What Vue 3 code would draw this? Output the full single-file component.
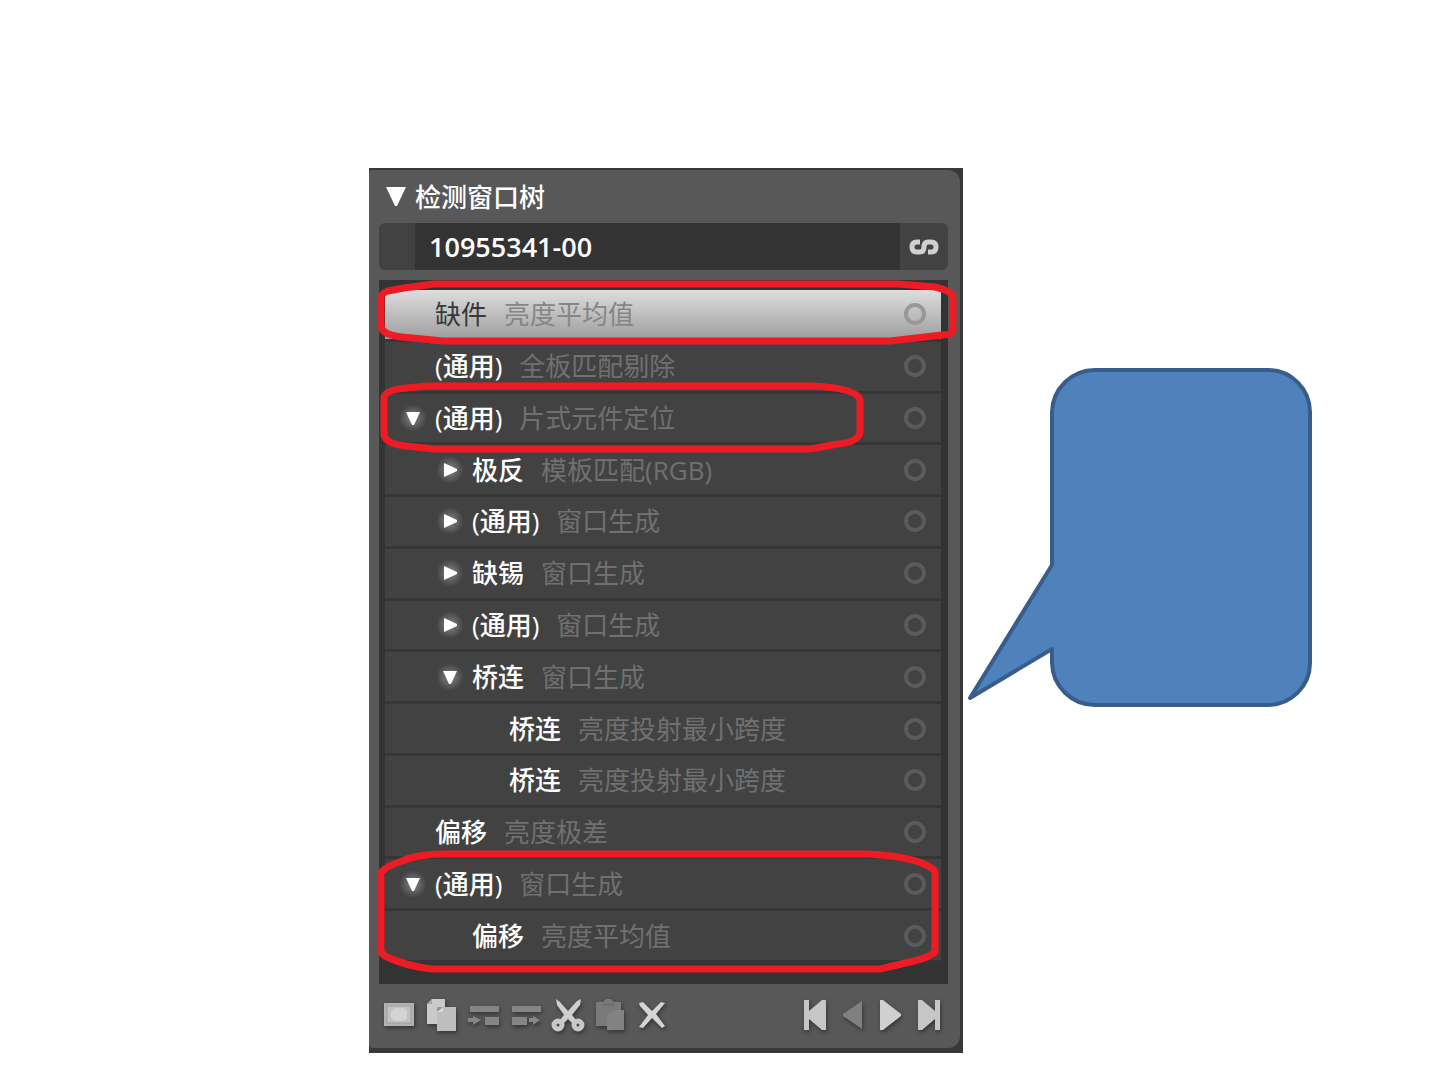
<script setup>
import { ref } from 'vue'

const board = ref('10955341-00')

const rows = [
  { name: '缺件', method: '亮度平均值', level: 0, selected: true },
  { name: '(通用)', method: '全板匹配剔除', level: 0 },
  { name: '(通用)', method: '片式元件定位', level: 0, toggle: 'open' },
  { name: '极反', method: '模板匹配(RGB)', level: 1, toggle: 'closed' },
  { name: '(通用)', method: '窗口生成', level: 1, toggle: 'closed' },
  { name: '缺锡', method: '窗口生成', level: 1, toggle: 'closed' },
  { name: '(通用)', method: '窗口生成', level: 1, toggle: 'closed' },
  { name: '桥连', method: '窗口生成', level: 1, toggle: 'open' },
  { name: '桥连', method: '亮度投射最小跨度', level: 2 },
  { name: '桥连', method: '亮度投射最小跨度', level: 2 },
  { name: '偏移', method: '亮度极差', level: 0 },
  { name: '(通用)', method: '窗口生成', level: 0, toggle: 'open' },
  { name: '偏移', method: '亮度平均值', level: 1 },
]
</script>

<template>
  <main class="slide">
    <section class="panel">
      <div class="frame">
        <header class="head">
          <button class="fold" aria-label="折叠">
            <svg width="20" height="20" viewBox="0 0 20 20"><path d="M0 0H20L11 19H9Z" fill="#fff" /></svg>
          </button>
          <h1>检测窗口树</h1>
        </header>

        <div class="board">
          <input v-model="board" type="text" aria-label="料号" />
          <button class="link" aria-label="链接">
            <svg width="30" height="18" viewBox="0 0 30 18">
              <path d="M11 4H8Q3 4 3 9Q3 14 8 14H11Q15 14 15 9Q15 4 19 4H22Q27 4 27 9Q27 14 22 14H19" fill="none" stroke="#d0d0d0" stroke-width="5" />
            </svg>
          </button>
        </div>

        <div class="tree-box">
          <ul class="tree">
            <li v-for="(row, i) in rows" :key="i" class="row" :class="['level-' + row.level, { selected: row.selected }]">
              <button v-if="row.toggle" class="toggle" :aria-label="row.toggle === 'open' ? '收起' : '展开'">
                <svg width="14" height="14" viewBox="0 0 14 14">
                  <path v-if="row.toggle === 'open'" d="M0 1H14L8 14H6Z" fill="#fff" />
                  <path v-else d="M1 0L14 6V8L1 14Z" fill="#fff" />
                </svg>
              </button>
              <span v-else class="toggle-space"></span>
              <span class="name">{{ row.name }}</span>
              <span class="method">{{ row.method }}</span>
              <span class="ring"></span>
            </li>
          </ul>
        </div>

        <footer class="tools">
          <div class="group edit">
            <button aria-label="新建窗口">
              <svg width="34" height="34" viewBox="0 0 34 34">
                <rect x="1" y="5" width="30" height="23" fill="#b2b2b2" />
                <rect x="4" y="8" width="24" height="17" fill="#c2c2c2" stroke="#a0a0a0" />
                <rect x="8" y="10" width="16" height="13" rx="5" fill="#d4d4d4" />
              </svg>
            </button>
            <button aria-label="复制">
              <svg width="34" height="34" viewBox="0 0 34 34">
                <path d="M7 1H20V9H13V26H2V6Z" fill="#cacaca" />
                <path d="M7 1V6H2Z" fill="#a6a6a6" />
                <path d="M18 9H31V33H12V14Z" fill="#bebebe" />
                <path d="M13 9H18L12 14V10Z" fill="#929292" />
                <path d="M18 9V14H12Z" fill="#dadada" />
              </svg>
            </button>
            <button aria-label="插入到左侧">
              <svg width="34" height="34" viewBox="0 0 34 34">
                <path d="M3 8H32V14H3ZM18 19H32V27H18ZM1 20H6V18L14 22L6 27V24H1Z" fill="#858585" />
              </svg>
            </button>
            <button aria-label="插入到右侧">
              <svg width="34" height="34" viewBox="0 0 34 34">
                <path d="M3 8H32V14H3ZM3 19H18V27H3ZM20 20H24V18L31 22L24 27V24H20Z" fill="#858585" />
              </svg>
            </button>
            <button aria-label="剪切">
              <svg width="34" height="34" viewBox="0 0 34 34">
                <path d="M5 1L9 4L17 13L26 3L30 1L29 7L21 17L26 23L22 26L17 21L12 26L8 23L13 17L6 7Z" fill="#cfcfcf" />
                <circle cx="7" cy="27" r="4" fill="#4c4c4c" stroke="#c8c8c8" stroke-width="5" />
                <circle cx="27" cy="27" r="4" fill="#4c4c4c" stroke="#c8c8c8" stroke-width="5" />
              </svg>
            </button>
            <button aria-label="粘贴" disabled>
              <svg width="34" height="34" viewBox="0 0 34 34">
                <path d="M3 4H10L13 1H18L21 4H28V28H3Z" fill="#7a7a7a" />
                <path d="M20 12H31V32H14V18Z" fill="#828282" />
                <path d="M10 5H21V8H10Z" fill="#707070" />
              </svg>
            </button>
            <button aria-label="删除">
              <svg width="34" height="34" viewBox="0 0 34 34">
                <path d="M4 5L8 4L17 13L26 4L30 5L21 16L30 28L27 30L17 20L8 30L4 29L13 17L5 8Z" fill="#d4d4d4" />
              </svg>
            </button>
          </div>
          <div class="group play">
            <button aria-label="第一个">
              <svg width="30" height="34" viewBox="0 0 30 34"><path d="M4 2H9V13L22 2H26V32H22L9 21V32H4Z" fill="#c6c6c6" /></svg>
            </button>
            <button aria-label="上一个" disabled>
              <svg width="30" height="34" viewBox="0 0 30 34"><path d="M24 3V31L5 18V16Z" fill="#808080" /></svg>
            </button>
            <button aria-label="下一个">
              <svg width="30" height="34" viewBox="0 0 30 34"><path d="M4 2H7L25 16V18L7 32H4Z" fill="#d0d0d0" /></svg>
            </button>
            <button aria-label="最后一个">
              <svg width="30" height="34" viewBox="0 0 30 34"><path d="M4 2H8L21 13V2H26V32H21V21L8 32H4Z" fill="#c6c6c6" /></svg>
            </button>
          </div>
        </footer>
      </div>

      <svg class="marks" viewBox="369 168 594 885" preserveAspectRatio="none" aria-hidden="true">
        <path d="M381 299Q381 293 388 291L404 288L434 284H898L935 287Q952 291 953 297V330Q952 335 942 335L890 341H443L402 337Q382 335 381 326Z" />
        <path d="M384 397Q386 390 406 388L428 386H812Q857 388 860 400V432Q859 442 838 444L810 449H435L406 446Q386 444 384 435Z" />
        <path d="M381 873Q384 867 402 861Q418 854 443 854H868Q921 857 935 871V952Q930 957 914 961L880 969H432Q405 966 385 956Q381 954 381 949Z" />
      </svg>
    </section>

    <aside class="aside">
      <svg class="callout" viewBox="0 0 346 341" aria-hidden="true">
        <path d="M128 3H301A42 42 0 0 1 343 45V296A42 42 0 0 1 301 338H128A43 43 0 0 1 85 296V282L3 331L85 198V45A43 43 0 0 1 128 3Z" fill="#4f81bd" stroke="#385d8a" stroke-width="4" stroke-linejoin="round" />
      </svg>
    </aside>
  </main>
</template>

<style>
body {
  background: #fff;
}
</style>

<style scoped>
.slide {
  display: grid;
  grid-template-columns: 369fr 594fr 470fr;
  align-items: start;
  padding-top: 168px;
  font-family: "Open Sans", "Noto Sans CJK SC", sans-serif;
  font-size: 26px;
  line-height: 36px;
}
button {
  display: flex;
  align-items: center;
  justify-content: center;
  padding: 0;
  border: 0;
  background: none;
}
.panel {
  grid-column: 2;
  position: relative;
  padding: 2px 3px 5px 0;
  background: #393939;
}
.frame {
  padding: 0 12px 0 10px;
  border-radius: 4px 12px 12px 4px;
  background: #585858;
}
.head {
  display: flex;
  align-items: center;
  gap: 9px;
  height: 53px;
  padding: 0 8px 0 7px;
}
h1 {
  margin: 0;
  color: #fff;
  font-size: 26px;
  font-weight: 500;
  line-height: 36px;
}
.board {
  display: flex;
  height: 47px;
  padding-left: 36px;
  margin-bottom: 10px;
  border-radius: 6px;
  background: #424242;
}
.board input {
  flex: 1;
  min-width: 0;
  padding: 0 14px;
  border: 0;
  background: #333;
  color: #fff;
  font-family: "Open Sans", sans-serif;
  font-size: 27px;
  font-weight: 600;
}
.link {
  width: 48px;
}
.tree-box {
  padding: 10px 7px 21px 6px;
  background: #333;
}
.tree {
  display: grid;
  grid-auto-rows: 1fr;
  min-height: 673px;
  margin: 0;
  padding: 0;
  list-style: none;
}
.row {
  display: flex;
  align-items: center;
  padding: 0 15px 0 14px;
  border-bottom: 3px solid #363636;
  background: #424242;
}
.level-1 {
  padding-left: 51px;
}
.level-2 {
  padding-left: 88px;
}
.row.selected {
  background: linear-gradient(#dedede, #9e9e9e);
}
.toggle,
.toggle-space {
  width: 28px;
  height: 28px;
  margin-right: 8px;
}
.toggle {
  border-radius: 14px;
  background: radial-gradient(#858585, #424242 70%);
}
.name {
  margin-right: 17px;
  color: #fff;
  font-weight: 500;
}
.selected .name {
  color: #383838;
  font-weight: 400;
}
.method {
  flex: 1;
  color: #707070;
  font-weight: 400;
}
.selected .method {
  color: #868686;
}
.ring {
  box-sizing: border-box;
  width: 22px;
  height: 22px;
  border: 4px solid #5b5b5b;
  border-radius: 11px;
}
.selected .ring {
  border-color: #989898;
}
.tools {
  display: flex;
  justify-content: space-between;
  align-items: center;
  height: 62px;
  padding-bottom: 2px;
}
.group {
  display: flex;
}
.group svg {
  filter: drop-shadow(1px 2px 2px #333);
}
.edit button {
  width: 42px;
}
.play button {
  width: 38px;
}
.marks {
  position: absolute;
  top: 0;
  left: 0;
  width: 100%;
  height: 100%;
  fill: none;
  stroke: #ed1c24;
  stroke-width: 7px;
  stroke-linejoin: round;
  pointer-events: none;
}
.aside {
  padding: 199px 0 0 4px;
}
.callout {
  display: block;
  width: 346px;
  max-width: 100%;
}
</style>
